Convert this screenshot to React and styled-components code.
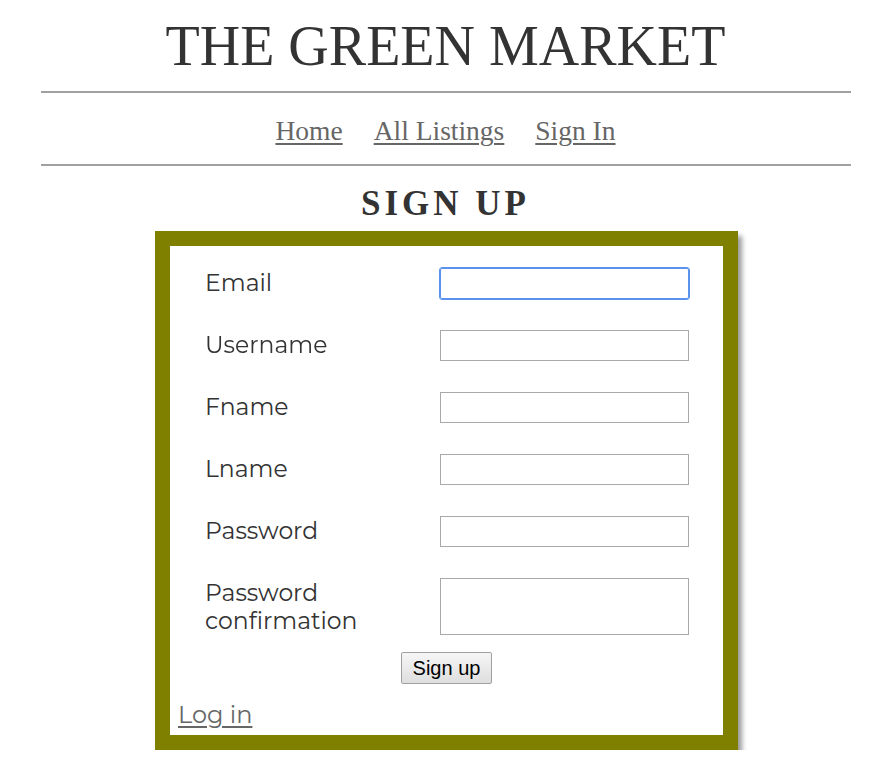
import React from "react";
import styled, { createGlobalStyle } from "styled-components";

const Global = createGlobalStyle`
  html, body { margin: 0; padding: 0; background: #fff; }
  body { font-family: "Liberation Serif", serif; color: #333; }
`;

const Page = styled.div`
  width: 810px;
  margin: 0 auto;
  padding-left: 1px;
  display: flex;
  flex-direction: column;
  align-items: center;
`;

const Title = styled.h1`
  margin: 14px 0 0;
  font-family: "Liberation Serif", serif;
  font-weight: 400;
  font-size: 56px;
  line-height: 64px;
  color: #333;
`;

const Rule = styled.hr`
  width: 100%;
  border: 0;
  border-top: 2px solid #a0a0a0;
  margin: ${(p) => p.$m || "10px 0 0"};
`;

const Nav = styled.nav`
  display: flex;
  gap: 31px;
  margin-top: 22px;
  height: 49px;
`;

const NavLink = styled.a`
  font-family: "Liberation Serif", serif;
  font-size: 27.5px;
  color: #666;
  text-decoration: underline;
  text-decoration-thickness: 2px;
  text-underline-offset: 3px;
`;

const Heading = styled.h2`
  margin: 18px 0 0;
  font-family: "Liberation Serif", serif;
  font-weight: 700;
  font-size: 35px;
  letter-spacing: 4px;
  line-height: 40px;
  color: #333;
`;

const Card = styled.div`
  margin-top: 7px;
  margin-left: 2px;
  box-sizing: border-box;
  width: 583px;
  border: 15px solid #808000;
  background: #fff;
  box-shadow: 4px 5px 5px rgba(0, 0, 0, 0.4);
  padding: 22px 0 8px 8px;
`;

const FormGrid = styled.div`
  display: grid;
  grid-template-columns: 235px 249px;
  row-gap: 31px;
  padding-left: 27px;
`;

const Label = styled.label`
  font-family: "Montserrat", "Noto Sans", sans-serif;
  font-size: 23.5px;
  line-height: 28px;
  margin-top: 1px;
  color: #333;
`;

const Input = styled.input`
  box-sizing: border-box;
  width: 249px;
  height: 31px;
  border: 1px solid ${(p) => (p.$focus ? "#5b92ed" : "#a9a9a9")};
  outline: ${(p) => (p.$focus ? "1px solid #5b92ed" : "none")};
  border-radius: ${(p) => (p.$focus ? "2px" : "0")};
  margin: 0;
  padding: 2px 3px;
  font-size: 16px;
`;

const TextArea = styled.textarea`
  box-sizing: border-box;
  width: 249px;
  height: 57px;
  border: 1px solid #a9a9a9;
  margin: 0;
  resize: none;
`;

const ButtonRow = styled.div`
  display: flex;
  justify-content: center;
  margin-top: 17px;
  padding-right: 8px;
`;

const Button = styled.button`
  font-family: "Liberation Sans", Arial, sans-serif;
  font-size: 20px;
  padding: 3px 11px;
  height: 32px;
  border: 1px solid #a0a0a0;
  border-radius: 2px;
  background: linear-gradient(#f6f6f6, #dedede);
  color: #000;
`;

const LoginLink = styled.a`
  display: inline-block;
  margin-top: 16px;
  margin-bottom: -2px;
  font-family: "Montserrat", "Noto Sans", sans-serif;
  font-size: 24px;
  color: #666;
  text-decoration: underline;
  text-underline-offset: 3px;
`;

export default function App() {
  const fields = ["Username", "Fname", "Lname", "Password"];
  return (
    <>
      <Global />
      <Page>
        <Title>THE GREEN MARKET</Title>
        <Rule $m="13px 0 0" />
        <Nav>
          <NavLink href="#">Home</NavLink>
          <NavLink href="#">All Listings</NavLink>
          <NavLink href="#">Sign In</NavLink>
        </Nav>
        <Rule $m="0" />
        <Heading>SIGN UP</Heading>
        <Card>
          <FormGrid>
            <Label>Email</Label>
            <Input $focus autoFocus />
            {fields.map((f) => (
              <React.Fragment key={f}>
                <Label>{f}</Label>
                <Input type={f === "Password" ? "password" : "text"} />
              </React.Fragment>
            ))}
            <Label>
              Password
              <br />
              confirmation
            </Label>
            <TextArea />
          </FormGrid>
          <ButtonRow>
            <Button>Sign up</Button>
          </ButtonRow>
          <LoginLink href="#">Log in</LoginLink>
        </Card>
      </Page>
    </>
  );
}
